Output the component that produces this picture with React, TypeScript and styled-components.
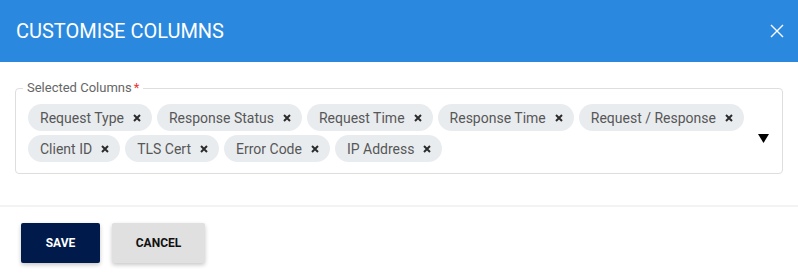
import React from 'react';
import styled, { createGlobalStyle } from 'styled-components';

const GlobalStyle = createGlobalStyle`
  html, body {
    margin: 0;
    padding: 0;
    background: #ffffff;
  }
  body {
    font-family: Roboto, 'Liberation Sans', Arial, sans-serif;
  }
  * {
    box-sizing: border-box;
  }
`;

const selected = [
  'Request Type',
  'Response Status',
  'Request Time',
  'Response Time',
  'Request / Response',
  'Client ID',
  'TLS Cert',
  'Error Code',
  'IP Address'
];

export default function App() {
  return (
    <>
      <GlobalStyle />
      <Dialog>
        <Header>
          <Title>CUSTOMISE COLUMNS</Title>
          <CloseButton aria-label="Close">
            <svg width="14" height="14" viewBox="0 0 14 14">
              <path
                d="M1 1 L13 13 M13 1 L1 13"
                stroke="#ffffff"
                strokeWidth="1.4"
                fill="none"
              />
            </svg>
          </CloseButton>
        </Header>

        <Body>
          <Field>
            <Legend>
              Selected Columns<Required>*</Required>
            </Legend>
            <FieldInner>
              <ChipList>
                {selected.map((name) => (
                  <Chip key={name}>
                    <span>{name}</span>
                    <ChipRemove>
                      <svg width="8" height="8" viewBox="0 0 8 8">
                        <path
                          d="M1 1 L7 7 M7 1 L1 7"
                          stroke="#2b2b2b"
                          strokeWidth="2"
                          fill="none"
                        />
                      </svg>
                    </ChipRemove>
                  </Chip>
                ))}
              </ChipList>
              <Caret>
                <svg width="11" height="9" viewBox="0 0 11 9">
                  <path d="M0 0 H11 L5.5 9 Z" fill="#000000" />
                </svg>
              </Caret>
            </FieldInner>
          </Field>
        </Body>

        <Footer>
          <Button $primary>SAVE</Button>
          <Button>CANCEL</Button>
        </Footer>
      </Dialog>
    </>
  );
}

const Dialog = styled.div`
  width: 798px;
  background: #ffffff;
`;

const Header = styled.div`
  height: 62px;
  background: #2a89de;
  display: flex;
  align-items: center;
  justify-content: space-between;
  padding: 0 14px 0 16px;
`;

const Title = styled.h2`
  margin: 0;
  color: #ffffff;
  font-size: 20px;
  font-weight: 400;
`;

const CloseButton = styled.button`
  border: none;
  background: none;
  padding: 0;
  width: 14px;
  height: 14px;
  display: flex;
  cursor: pointer;
`;

const Body = styled.div`
  padding: 19px 15px 31px 15px;
  border-bottom: 2px solid #f3f3f3;
`;

const Field = styled.fieldset`
  margin: 0;
  min-width: 0;
  border: 1px solid #dedede;
  border-radius: 4px;
  padding: 9px 12px 11px 12px;
`;

const Legend = styled.legend`
  margin-left: -5px;
  padding: 0 4px;
  font-size: 13px;
  line-height: 14px;
  color: #666666;
`;

const Required = styled.span`
  color: #e53935;
  margin-left: 2px;
`;

const FieldInner = styled.div`
  display: flex;
  align-items: center;
`;

const ChipList = styled.div`
  flex: 1;
  display: flex;
  flex-wrap: wrap;
  gap: 4px 5px;
  padding-right: 4px;
`;

const Chip = styled.div`
  display: inline-flex;
  align-items: center;
  height: 27px;
  padding: 0 11px 0 12px;
  border-radius: 14px;
  background: #e9ecef;
  color: #575757;
  font-size: 14px;
`;

const ChipRemove = styled.span`
  display: inline-flex;
  margin-left: 9px;
`;

const Caret = styled.div`
  display: flex;
  width: 11px;
  margin-right: 1px;
  margin-top: 10px;
`;

const Footer = styled.div`
  display: flex;
  gap: 12px;
  padding: 16px 21px;
`;

const Button = styled.button<{ $primary?: boolean }>`
  height: 40px;
  padding: 0;
  width: ${(p) => (p.$primary ? '79px' : '93px')};
  border: none;
  border-radius: 2px;
  background: ${(p) => (p.$primary ? '#001a4b' : '#e0e0e0')};
  color: ${(p) => (p.$primary ? '#ffffff' : '#111111')};
  font-family: Roboto, 'Liberation Sans', Arial, sans-serif;
  font-size: 12px;
  font-weight: 700;
  box-shadow: 0 2px 4px rgba(0, 0, 0, 0.22);
  cursor: pointer;
`;
